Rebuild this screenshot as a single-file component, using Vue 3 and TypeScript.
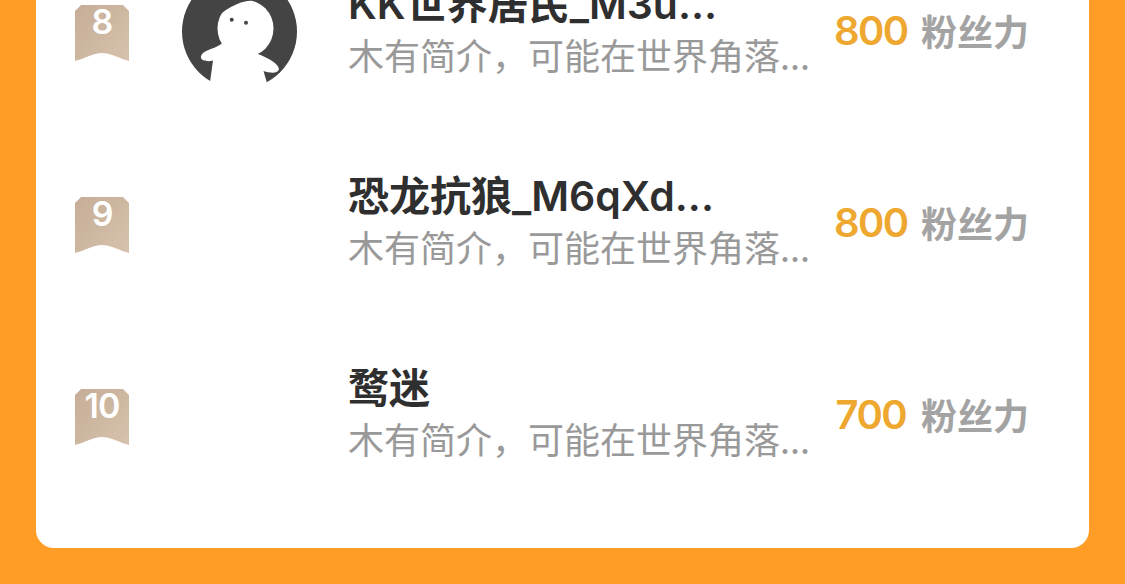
<script setup lang="ts">
interface FanRow {
  rank: number
  name: string
  score: number
  hasAvatar: boolean
}

const bio = '木有简介，可能在世界角落...'

const rows: FanRow[] = [
  { rank: 8, name: 'KK世界居民_M3u...', score: 800, hasAvatar: true },
  { rank: 9, name: '恐龙抗狼_M6qXd...', score: 800, hasAvatar: false },
  { rank: 10, name: '鹜迷', score: 700, hasAvatar: false },
]
</script>

<template>
  <div class="page">
    <section class="card">
      <div v-for="row in rows" :key="row.rank" class="row">
        <div class="badge">{{ row.rank }}</div>
        <div class="avatar">
          <svg v-if="row.hasAvatar" viewBox="0 0 115 115" width="115" height="115">
            <circle cx="57.5" cy="57.5" r="57.5" fill="#444" />
            <g clip-path="circle(57.5px at 57.5px 57.5px)">
              <ellipse cx="63.5" cy="54.5" rx="28" ry="28.5" fill="#fff" />
              <path
                d="M39.7 69.8C31 76 20 76 18.7 83C19 87 26 88 31 86.5L28 108L30 120L85 120L84.7 108L81.5 97C88 99 96 100 97 95C96 89 86 84 76 80Z"
                fill="#fff"
              />
            </g>
            <circle cx="49.7" cy="45.8" r="2" fill="#444" />
            <circle cx="64" cy="48.8" r="2" fill="#444" />
          </svg>
        </div>
        <div class="info">
          <div class="name">{{ row.name }}</div>
          <div class="bio">{{ bio }}</div>
        </div>
        <div class="stat">
          <span class="score">{{ row.score }}</span>
          <span class="unit">粉丝力</span>
        </div>
      </div>
    </section>
  </div>
</template>

<style>
html,
body {
  margin: 0;
  overflow: hidden;
}
</style>

<style scoped>
.page {
  height: 584px;
  box-sizing: border-box;
  padding: 0 36px 36px;
  background: #ff9d27;
  display: flex;
  flex-direction: column;
  justify-content: flex-end;
  overflow: hidden;
  font-family: "Noto Sans CJK SC", sans-serif;
}
.card {
  flex-shrink: 0;
  background: #fff;
  border-radius: 0 0 18px 18px;
  padding-bottom: 37px;
}
.row {
  height: 192px;
  display: flex;
  align-items: center;
  padding-left: 39px;
}
.badge {
  width: 54px;
  height: 56px;
  margin-top: 4px;
  flex-shrink: 0;
  box-sizing: border-box;
  padding-bottom: 23px;
  display: flex;
  align-items: center;
  justify-content: center;
  color: #fff;
  font-family: Inter, sans-serif;
  font-size: 34px;
  font-weight: 600;
  letter-spacing: -1px;
  background: linear-gradient(135deg, #c6ad96, #d6c2ad);
  clip-path: path("M6 0H48L54 6V56C45 54 36 48 27 48C18 48 9 54 0 56V6Z");
}
.avatar {
  width: 115px;
  height: 115px;
  flex-shrink: 0;
  margin-left: 53px;
}
.avatar svg {
  display: block;
}
.info {
  width: 486px;
  flex-shrink: 0;
  margin-left: 51px;
  margin-bottom: 3px;
}
.name {
  font-family: Inter, "Noto Sans CJK SC", sans-serif;
  font-size: 41px;
  line-height: 49px;
  font-weight: 600;
  color: #2f2f2f;
  white-space: nowrap;
}
.bio {
  margin-top: 1px;
  font-size: 36px;
  line-height: 49px;
  color: #999;
  white-space: nowrap;
}
.stat {
  display: flex;
  align-items: center;
  gap: 15px;
  margin-bottom: 2px;
}
.score {
  width: 72px;
  text-align: right;
  font-family: Inter, sans-serif;
  font-size: 40px;
  font-weight: 600;
  letter-spacing: -1.6px;
  color: #eea72f;
}
.unit {
  font-size: 36px;
  font-weight: 700;
  color: #a3a3a3;
}
</style>
